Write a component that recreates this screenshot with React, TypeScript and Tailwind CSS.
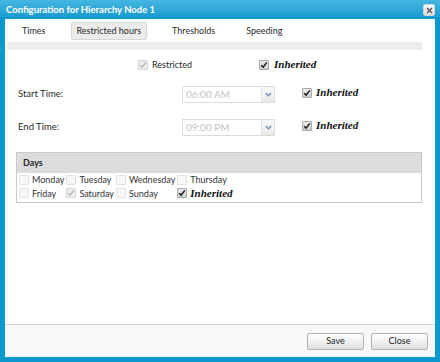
import React from 'react'

type BoxProps = { checked?: boolean; disabled?: boolean; faint?: boolean }

function Box({ checked, disabled, faint }: BoxProps) {
  const tone = faint
    ? 'border-[#e2e2e2] bg-[#f7f7f7]'
    : disabled
      ? 'border-[#d6d6d6] bg-[#ededed]'
      : 'border-[#a8a8a8] bg-gradient-to-b from-[#ececec] to-[#cfcfcf]'
  return (
    <span className={`inline-flex w-[10px] h-[10px] shrink-0 items-center justify-center border rounded-[1px] ${tone}`}>
      {checked && (
        <svg width="8" height="8" viewBox="0 0 8 8">
          <path
            d="M1.2 4.2 L3.1 6.1 L6.8 1.4"
            fill="none"
            stroke={disabled ? '#b9b9b9' : '#1a1a1a'}
            strokeWidth="1.5"
          />
        </svg>
      )}
    </span>
  )
}

function Inherited() {
  return (
    <span className="font-[family-name:'Liberation_Serif',serif] italic font-bold text-[11px] text-[#111] leading-none">
      Inherited
    </span>
  )
}

function Combo({ value }: { value: string }) {
  return (
    <div className="w-[93px] h-[17px] flex border border-[#dcdcdc] bg-white">
      <div className="flex-1 flex items-center pl-[3px] text-[#c4c4c4] text-[10px]">{value}</div>
      <div className="w-[13px] flex items-center justify-center border-l border-[#e2e2e2] bg-gradient-to-b from-[#fafafa] to-[#e9e9e9]">
        <svg width="7" height="5" viewBox="0 0 7 5">
          <path d="M0.8 1 L3.5 3.8 L6.2 1" fill="none" stroke="#6f8fb8" strokeWidth="1.3" />
        </svg>
      </div>
    </div>
  )
}

function Day({ name, checked, disabled }: { name: string; checked?: boolean; disabled?: boolean }) {
  return (
    <div className="h-[13.5px] flex items-center pl-[2px]">
      <Box checked={checked} disabled={disabled} faint={!checked} />
      <span className="ml-[3px] text-[#333]">{name}</span>
    </div>
  )
}

export default function App() {
  const tabs = ['Times', 'Restricted hours', 'Thresholds', 'Speeding']

  return (
    <div className="w-[440px] h-[362px] bg-[#0d98cd] flex flex-col font-[family-name:Lato,sans-serif] text-[9px] text-[#2a2a2a]">
      <div className="h-[19px] shrink-0 flex items-center justify-between pl-[6px] pr-[5px] bg-gradient-to-b from-[#44b6e2] to-[#0d98cd]">
        <span className="text-white font-bold text-[9.5px] leading-none">Configuration for Hierarchy Node 1</span>
        <span className="w-[12px] h-[12px] mt-[1px] flex items-center justify-center rounded-[2px] border border-[#c9d6dd] bg-gradient-to-b from-[#f6f6f6] to-[#dcdcdc]">
          <svg width="7" height="7" viewBox="0 0 7 7">
            <path d="M1 1 L6 6 M6 1 L1 6" stroke="#555" strokeWidth="1.4" />
          </svg>
        </span>
      </div>

      <div className="flex-1 mx-[5px] mb-[5px] bg-white flex flex-col">
        <div className="h-[23px] flex items-center pl-[11px] gap-[19px]">
          {tabs.map((t) => (
            <span
              key={t}
              className={`h-[18px] px-[5px] flex items-center rounded-[2px] border ${
                t === 'Restricted hours'
                  ? 'bg-[#ececec] border-[#d6d6d6]'
                  : 'border-transparent'
              }`}
            >
              {t}
            </span>
          ))}
        </div>
        <div className="h-[8px] ml-[2px] mr-[13px] bg-[#ececec]" />

        <div className="flex-1">
          <div className="mt-[9px] h-[11px] flex items-center pl-[133px]">
            <div className="w-[121px] flex items-center">
              <Box checked disabled />
              <span className="ml-[4px]">Restricted</span>
            </div>
            <Box checked />
            <span className="ml-[5px]"><Inherited /></span>
          </div>

          <div className="mt-[16px] h-[17px] flex items-center pl-[13px] text-[9.5px]">
            <span className="w-[164px]">Start Time:</span>
            <Combo value="06:00 AM" />
            <div className="ml-[27px] mb-[3px] flex items-center">
              <Box checked />
              <span className="ml-[4px]"><Inherited /></span>
            </div>
          </div>

          <div className="mt-[16px] h-[17px] flex items-center pl-[13px] text-[9.5px]">
            <span className="w-[164px]">End Time:</span>
            <Combo value="09:00 PM" />
            <div className="ml-[27px] mb-[3px] flex items-center">
              <Box checked />
              <span className="ml-[4px]"><Inherited /></span>
            </div>
          </div>

          <div className="mt-[16px] ml-[11px] w-[406px] border border-[#c9c9c9]">
            <div className="h-[20px] flex items-center pl-[6px] bg-[#dcdcdc] font-bold">Days</div>
            <div className="grid grid-cols-[auto_auto_auto_auto] justify-start pb-[2px]">
              <Day name="Monday" />
              <Day name="Tuesday" />
              <Day name="Wednesday" />
              <Day name="Thursday" />
              <Day name="Friday" />
              <Day name="Saturday" checked disabled />
              <Day name="Sunday" />
              <div className="h-[13.5px] flex items-center pl-[2px]">
                <Box checked />
                <span className="ml-[3px]"><Inherited /></span>
              </div>
            </div>
          </div>
        </div>

        <div className="h-[33px] shrink-0 border-t border-[#d4d4d4] bg-[#f8f8f8] flex items-center justify-end gap-[7px] pr-[7px]">
          {['Save', 'Close'].map((b) => (
            <button
              key={b}
              className="w-[57px] h-[17px] flex items-center justify-center rounded-[2px] border border-[#b3b3b3] bg-gradient-to-b from-[#ffffff] via-[#f1f1f1] to-[#dedede] text-[#222]"
            >
              {b}
            </button>
          ))}
        </div>
      </div>
    </div>
  )
}
